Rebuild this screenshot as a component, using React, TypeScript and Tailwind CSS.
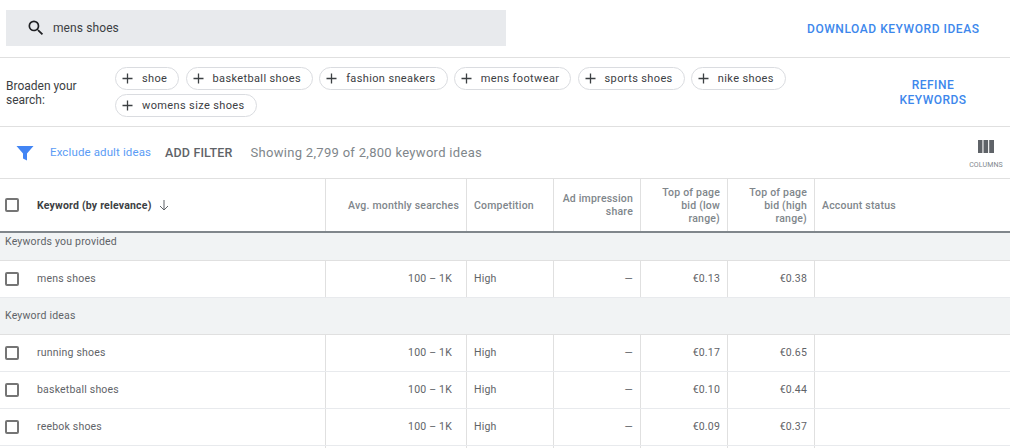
import React from "react";

const chipsA = ["shoe", "basketball shoes", "fashion sneakers", "mens footwear", "sports shoes", "nike shoes"];

function Plus() {
  return (
    <svg width="11" height="11" viewBox="0 0 11 11" className="shrink-0 text-[#3c4043]">
      <path d="M5.5 0.5v10M0.5 5.5h10" stroke="currentColor" strokeWidth="1.3" fill="none" />
    </svg>
  );
}

function Chip({ label }: { label: string }) {
  return (
    <div className="flex h-[23px] items-center gap-[9px] rounded-full border border-[#dadce0] pl-[6px] pr-[11px] text-[11px] tracking-[0.37px] text-[#3c4043]">
      <Plus />
      <span className="pt-[2px]">{label}</span>
    </div>
  );
}

function Box() {
  return <div className="h-[14px] w-[14px] rounded-[2px] border-2 border-[#757575]" />;
}

function Row({ kw, vol, comp, dash, low, high, last }: { kw?: string; vol?: string; comp?: string; dash?: string; low?: string; high?: string; last?: boolean }) {
  return (
    <div className={`flex h-[37px] text-[10.5px] tracking-[0.2px] text-[#5f6368] ${last ? "" : "border-b border-[#e8eaed]"}`}>
      <div className="flex w-[326px] shrink-0 items-center border-r border-[#e0e0e0] pl-[5px]">
        {kw ? <Box /> : null}
        <span className="ml-[18px]">{kw}</span>
      </div>
      <div className="flex w-[141px] shrink-0 items-center justify-end border-r border-[#e0e0e0] pr-[14px]">{vol}</div>
      <div className="flex w-[87px] shrink-0 items-center border-r border-[#e0e0e0] pl-[7px]">{comp}</div>
      <div className="flex w-[87px] shrink-0 items-center justify-end border-r border-[#e0e0e0] pr-[7px]">{dash}</div>
      <div className="flex w-[87px] shrink-0 items-center justify-end border-r border-[#e0e0e0] pr-[7px]">{low}</div>
      <div className="flex w-[87px] shrink-0 items-center justify-end border-r border-[#e0e0e0] pr-[7px]">{high}</div>
      <div className="flex-1" />
    </div>
  );
}

function Section({ label, h, top }: { label: string; h: string; top?: boolean }) {
  return (
    <div className={`flex ${h} ${top ? "items-start pt-[1px]" : "items-center"} border-b border-[#e0e0e0] bg-[#f1f3f4] pl-[5px] text-[10.5px] tracking-[0.2px] text-[#5f6368]`}>
      {label}
    </div>
  );
}

export default function App() {
  return (
    <div className="h-[448px] w-[1010px] overflow-hidden bg-white font-['Roboto',sans-serif]">
      <div className="flex h-[58px] items-start border-b border-[#e0e0e0]">
        <div className="mt-[10px] ml-[6px] flex h-[36px] w-[500px] items-center bg-[#e8eaed] pl-[20px] text-[12px] tracking-[0.1px] text-[#3c4043]">
          <svg width="20" height="20" viewBox="0 0 24 24" className="text-[#202124]">
            <path d="M15.5 14h-.79l-.28-.27A6.47 6.47 0 0 0 16 9.5 6.5 6.5 0 1 0 9.5 16c1.61 0 3.09-.59 4.23-1.57l.27.28v.79l5 4.99L20.49 19l-4.99-5zm-6 0C7.01 14 5 11.99 5 9.5S7.01 5 9.5 5 14 7.01 14 9.5 11.99 14 9.5 14z" fill="currentColor" />
          </svg>
          <span className="ml-[7px]">mens shoes</span>
        </div>
        <div className="mt-[22px] ml-[301px] text-[12px] leading-[14px] font-medium tracking-[0.55px] whitespace-nowrap text-[#3d87ec]">DOWNLOAD KEYWORD IDEAS</div>
      </div>

      <div className="flex h-[69px] border-b border-[#e0e0e0]">
        <div className="mt-[21px] ml-[6px] w-[109px] shrink-0 text-[12px] leading-[14px] text-[#3c4043]">
          Broaden your<br />search:
        </div>
        <div className="mt-[9px] flex w-[690px] flex-wrap content-start gap-x-[6.2px] gap-y-[4px]">
          {chipsA.map((c) => (
            <Chip key={c} label={c} />
          ))}
          <Chip label="womens size shoes" />
        </div>
        <div className="mt-[20px] flex-1 pr-[14px] pl-[65px] text-center text-[12px] leading-[14.5px] font-medium tracking-[0.45px] text-[#3d87ec]">
          REFINE<br />KEYWORDS
        </div>
      </div>

      <div className="flex h-[52px] items-center border-b border-[#e0e0e0]">
        <svg width="18" height="16" viewBox="0 0 18 16" className="ml-[16px] shrink-0 text-[#4285f4]">
          <path d="M0.5 1h17L11 8.6V15.5L7 13.5V8.6z" fill="currentColor" />
        </svg>
        <span className="ml-[16px] pt-[1px] text-[11.5px] tracking-[0.12px] text-[#5b9cf5]">Exclude adult ideas</span>
        <span className="ml-[14px] pt-[1px] text-[12.5px] font-medium tracking-[0.15px] text-[#5f6368]">ADD FILTER</span>
        <span className="ml-[18px] pt-[1px] text-[13px] tracking-[0.3px] text-[#80868b]">Showing 2,799 of 2,800 keyword ideas</span>
        <div className="ml-auto flex w-[46px] flex-col items-center pr-[2px]">
          <svg width="16" height="13" viewBox="0 0 16 13" className="mt-[3px] text-[#5f6368]">
            <path d="M0 0h4.4v13H0zM5.5 0h4.6v13H5.5zM11.2 0H16v13h-4.8z" fill="currentColor" />
          </svg>
          <span className="mt-[8px] text-[7px] leading-[8px] tracking-[0.12px] text-[#80868b]">COLUMNS</span>
        </div>
      </div>

      <div className="flex h-[54px] border-b-2 border-[#80868b] text-[10.5px] leading-[13px] font-medium tracking-[0.2px] text-[#80868b]">
        <div className="flex w-[326px] shrink-0 items-center border-r border-[#e0e0e0] pl-[5px]">
          <Box />
          <span className="ml-[18px] font-bold text-[#3c4043]">Keyword (by relevance)</span>
          <svg width="12" height="12" viewBox="0 0 12 12" className="ml-[6px] text-[#5f6368]">
            <path d="M6 1v10M2 7l4 4 4-4" stroke="currentColor" strokeWidth="1" fill="none" />
          </svg>
        </div>
        <div className="flex w-[141px] shrink-0 items-center justify-end border-r border-[#e0e0e0] pr-[7px]">Avg. monthly searches</div>
        <div className="flex w-[87px] shrink-0 items-center border-r border-[#e0e0e0] pl-[7px]">Competition</div>
        <div className="flex w-[87px] shrink-0 items-center justify-end border-r border-[#e0e0e0] pr-[7px] text-right">Ad impression<br />share</div>
        <div className="flex w-[87px] shrink-0 items-center justify-end border-r border-[#e0e0e0] pr-[7px] text-right">Top of page<br />bid (low<br />range)</div>
        <div className="flex w-[87px] shrink-0 items-center justify-end border-r border-[#e0e0e0] pr-[7px] text-right">Top of page<br />bid (high<br />range)</div>
        <div className="flex flex-1 items-center pl-[7px]">Account status</div>
      </div>

      <Section label="Keywords you provided" h="h-[28px]" top />
      <Row kw="mens shoes" vol="100 – 1K" comp="High" dash="—" low="€0.13" high="€0.38" />
      <Section label="Keyword ideas" h="h-[37px]" />
      <Row kw="running shoes" vol="100 – 1K" comp="High" dash="—" low="€0.17" high="€0.65" />
      <Row kw="basketball shoes" vol="100 – 1K" comp="High" dash="—" low="€0.10" high="€0.44" />
      <Row kw="reebok shoes" vol="100 – 1K" comp="High" dash="—" low="€0.09" high="€0.37" />
      <Row last />
    </div>
  );
}
